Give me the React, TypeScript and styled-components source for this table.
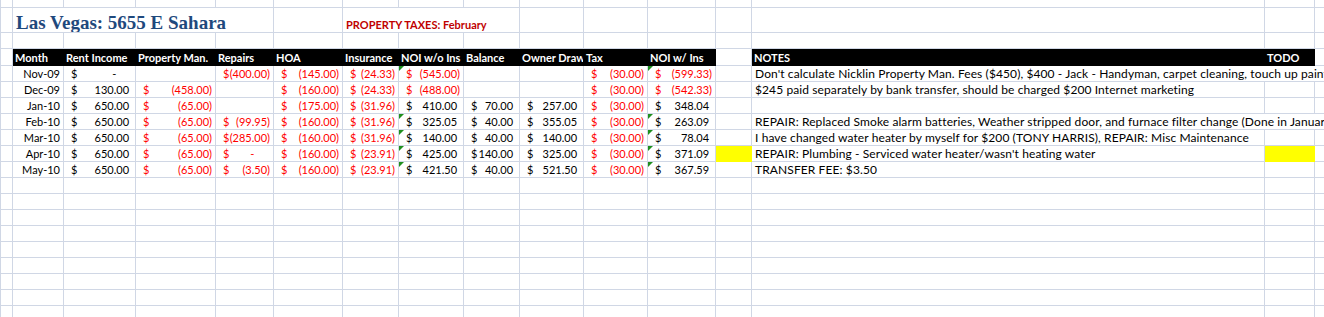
import styled, { createGlobalStyle, css } from 'styled-components';

const GRID = '#D0D7E5';
const RED = '#FF0000';
const YELLOW = '#FFFF00';

const GlobalStyle = createGlobalStyle`
  html, body {
    margin: 0;
    padding: 0;
    background: #fff;
    overflow: hidden;
  }
`;

const COLS = [12, 51, 72, 80, 58, 69, 56, 65, 56, 64, 64, 68, 36, 513, 50, 60];

const Sheet = styled.table<{ $width: number }>`
  border-collapse: collapse;
  table-layout: fixed;
  width: ${(p) => p.$width}px;
  font-family: Lato, "Liberation Sans", sans-serif;
  font-size: 11px;
  color: #000;
`;

const Col = styled.col<{ $w: number }>`
  width: ${(p) => p.$w}px;
`;

const Row = styled.tr<{ $h: number }>`
  height: ${(p) => p.$h}px;
`;

const Cell = styled.td<{ $fill?: string; $align?: string; $tone?: string; $flag?: boolean; $top?: boolean }>`
  position: relative;
  box-sizing: border-box;
  border: 1px solid ${(p) => p.$fill ?? GRID};
  ${(p) => p.$top && css`border-top: none;`}
  background: ${(p) => p.$fill ?? 'transparent'};
  padding: 0 3px 1px 3px;
  vertical-align: bottom;
  white-space: nowrap;
  overflow: hidden;
  text-align: ${(p) => p.$align ?? 'left'};
  color: ${(p) => p.$tone ?? '#000'};
  line-height: 13px;
  ${(p) => p.$flag && css`
    &::before {
      content: '';
      position: absolute;
      left: 0;
      top: 0;
      border-top: 5px solid #1f8f1f;
      border-right: 5px solid transparent;
    }
  `}
`;

const HeadCell = styled(Cell)`
  background: #000;
  border-color: #000;
  color: #fff;
  font-weight: 700;
  padding-left: 2px;
`;

const TitleCell = styled(Cell)`
  padding-bottom: 0;
`;

const NoteCell = styled(Cell)`
  font-size: 12px;
  letter-spacing: 0.1px;
`;

const Title = styled.span`
  font-family: "Liberation Serif", "DejaVu Serif", serif;
  font-weight: 700;
  font-size: 19px;
  line-height: 19px;
  color: #1f497d;
`;

const Alert = styled.span`
  font-weight: 700;
  font-size: 11px;
  color: #c00000;
`;

const Amount = styled.span`
  display: flex;
  justify-content: space-between;
  padding-left: 4px;
`;

const Pad = styled.span`
  visibility: hidden;
`;

type Value = string | null;

const Money = ({ value }: { value: Value }) => {
  if (value === null) return null;
  const zero = value === '-';
  const neg = value.startsWith('(');
  return (
    <Amount>
      <span>$</span>
      <span>
        {value}
        {zero && <Pad>00)</Pad>}
        {!zero && !neg && <Pad>)</Pad>}
      </span>
    </Amount>
  );
};

type Entry = {
  month: string;
  vals: Value[];
  note: string;
  wide?: boolean;
  flags?: boolean;
  mark?: boolean;
};

// rent, prop man, repairs, hoa, insurance, noi w/o, balance, owner draw, tax, noi w/
const redCols = [false, true, true, true, true, false, false, false, true, false];

const entries: Entry[] = [
  {
    month: 'Nov-09',
    vals: ['-', null, '(400.00)', '(145.00)', '(24.33)', '(545.00)', null, null, '(30.00)', '(599.33)'],
    note: "Don't calculate Nicklin Property Man. Fees ($450), $400 - Jack - Handyman, carpet cleaning, touch up paint,",
    wide: true,
    flags: true
  },
  {
    month: 'Dec-09',
    vals: ['130.00', '(458.00)', null, '(160.00)', '(24.33)', '(488.00)', null, null, '(30.00)', '(542.33)'],
    note: '$245 paid separately by bank transfer, should be charged $200 Internet marketing'
  },
  {
    month: 'Jan-10',
    vals: ['650.00', '(65.00)', null, '(175.00)', '(31.96)', '410.00', '70.00', '257.00', '(30.00)', '348.04'],
    note: ''
  },
  {
    month: 'Feb-10',
    vals: ['650.00', '(65.00)', '(99.95)', '(160.00)', '(31.96)', '325.05', '40.00', '355.05', '(30.00)', '263.09'],
    note: 'REPAIR: Replaced Smoke alarm batteries, Weather stripped door, and furnace filter change (Done in January)',
    wide: true,
    flags: true
  },
  {
    month: 'Mar-10',
    vals: ['650.00', '(65.00)', '(285.00)', '(160.00)', '(31.96)', '140.00', '40.00', '140.00', '(30.00)', '78.04'],
    note: 'I have changed water heater by myself for $200 (TONY HARRIS), REPAIR: Misc Maintenance',
    flags: true
  },
  {
    month: 'Apr-10',
    vals: ['650.00', '(65.00)', '-', '(160.00)', '(23.91)', '425.00', '140.00', '325.00', '(30.00)', '371.09'],
    note: "REPAIR: Plumbing - Serviced water heater/wasn't heating water",
    flags: true,
    mark: true
  },
  {
    month: 'May-10',
    vals: ['650.00', '(65.00)', '(3.50)', '(160.00)', '(23.91)', '421.50', '40.00', '521.50', '(30.00)', '367.59'],
    note: 'TRANSFER FEE: $3.50',
    flags: true
  }
];

const headers = ['Month', 'Rent Income', 'Property Man.', 'Repairs', 'HOA', 'Insurance', 'NOI w/o Ins', 'Balance', 'Owner Draw', 'Tax', 'NOI w/ Ins'];

const blank = (count: number, prefix: string) =>
  Array.from({ length: count }, (_, i) => <Cell key={`${prefix}${i}`} />);

const App = (): JSX.Element => {
  const width = COLS.reduce((a, b) => a + b, 0);

  return (
    <>
      <GlobalStyle />
      <Sheet $width={width}>
        <colgroup>
          {COLS.map((w, i) => <Col key={i} $w={w} />)}
        </colgroup>
        <tbody>
          <Row $h={7}>
            {COLS.map((_, i) => <Cell key={i} $top />)}
          </Row>
          <Row $h={25}>
            <Cell />
            <TitleCell colSpan={4}><Title>Las Vegas: 5655 E Sahara</Title></TitleCell>
            <Cell />
            <Cell colSpan={3}><Alert>PROPERTY TAXES: February</Alert></Cell>
            {blank(7, 't')}
          </Row>
          <Row $h={16}>
            {blank(16, 'b')}
          </Row>
          <Row $h={17}>
            <Cell />
            {headers.map((h) => <HeadCell key={h}>{h}</HeadCell>)}
            <Cell />
            <HeadCell>NOTES</HeadCell>
            <HeadCell>TODO</HeadCell>
            <Cell />
          </Row>
          {entries.map((e) => (
            <Row $h={16} key={e.month}>
              <Cell />
              <Cell $align="right">{e.month}</Cell>
              {e.vals.map((v, i) => {
                const neg = v !== null && (redCols[i] || v.startsWith('('));
                const flagged = !!e.flags && (i === 5 || i === 9);
                return (
                  <Cell key={i} $tone={neg ? RED : '#000'} $flag={flagged}>
                    <Money value={v} />
                  </Cell>
                );
              })}
              <Cell $fill={e.mark ? YELLOW : undefined} />
              {e.wide ? (
                <NoteCell colSpan={3}>{e.note}</NoteCell>
              ) : (
                <>
                  <NoteCell>{e.note}</NoteCell>
                  <Cell $fill={e.mark ? YELLOW : undefined} />
                  <Cell />
                </>
              )}
            </Row>
          ))}
          {Array.from({ length: 9 }, (_, r) => (
            <Row $h={16} key={`e${r}`}>
              {blank(16, `e${r}-`)}
            </Row>
          ))}
        </tbody>
      </Sheet>
    </>
  );
};

export default App;
